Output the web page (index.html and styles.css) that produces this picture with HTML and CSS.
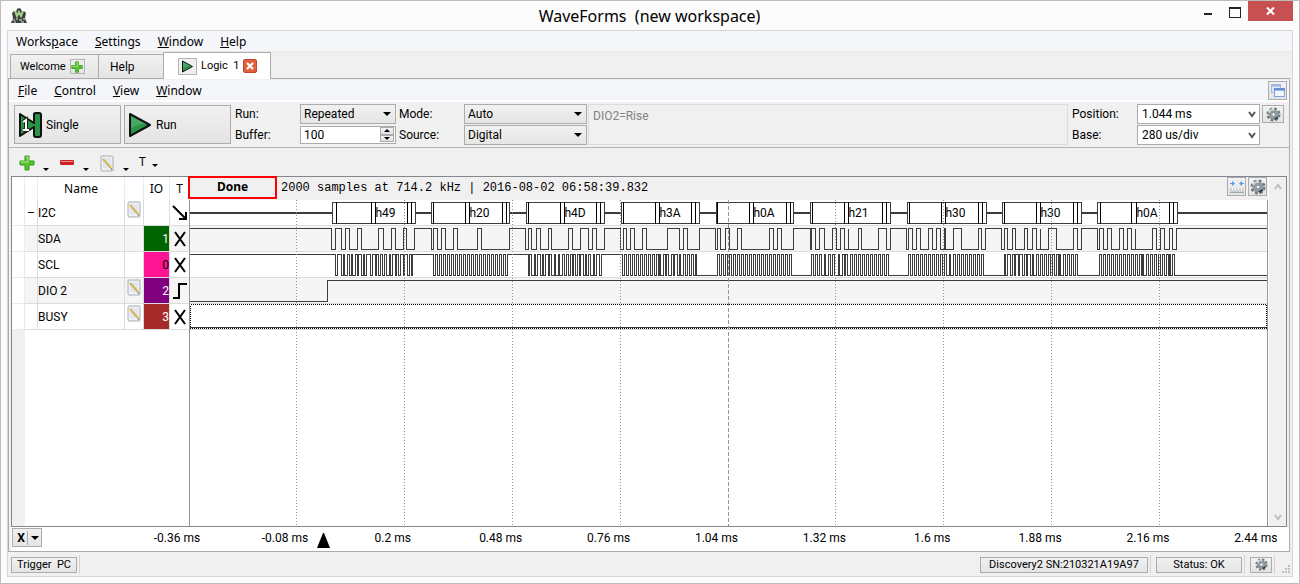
FILE: index.html
```html
<!DOCTYPE html>
<html lang="en">
<head>
    <meta charset="UTF-8">
    <meta name="viewport" content="width=device-width, initial-scale=1.0">
    <title>WaveForms (new workspace)</title>
    <link rel="stylesheet" href="styles.css">
</head>
<body>
    <!-- shared icons -->
    <svg class="defs" aria-hidden="true">
        <symbol id="gear" viewBox="0 0 16 16">
            <circle cx="8" cy="8" r="6" fill="none" stroke="#6d777c" stroke-width="3" stroke-dasharray="2.7 2"/>
            <circle cx="8" cy="8" r="4" fill="#dfe5e6" stroke="#8d999d" stroke-width="3"/>
            <path d="M3 6 A5 5 0 0 1 9 3" fill="none" stroke="#ccd5d7" stroke-width="2"/>
            <path d="M9 13 L13 11" stroke="#384650" stroke-width="2"/>
            <circle cx="8" cy="8" r="2" fill="#fff" stroke="#66757c"/>
        </symbol>
        <symbol id="plus" viewBox="0 0 16 16">
            <path d="M6 1h4v5h5v4h-5v5H6v-5H1V6h5z" fill="#5cc32c" stroke="#2f9a22"/>
            <path d="M7 2h2v5H2" fill="none" stroke="#b6ec8c"/>
        </symbol>
        <symbol id="note" viewBox="0 0 14 17">
            <rect x="1" y="1" width="12" height="15" rx="1" fill="#eef1f4" stroke="#a9adb4"/>
            <path d="M3 4h8M3 6h8M3 8h8M3 10h8M3 12h8" stroke="#cfdcf0"/>
            <path d="M3 4 L11 13" stroke="#d8b64e" stroke-width="2"/>
            <path d="M11 13l1 2" stroke="#777"/>
        </symbol>
        <symbol id="play" viewBox="0 0 24 26">
            <path d="M2 2 L22 13 L2 24z" fill="#289447" stroke="#111" stroke-width="2" stroke-linejoin="round"/>
            <path d="M3 4 L18 12 Q8 12 3 17z" fill="#6fbf83" opacity=".45"/>
        </symbol>
        <symbol id="chevron" viewBox="0 0 8 7">
            <path d="M1 1 L4 5 L7 1" fill="none" stroke="currentColor" stroke-width="2"/>
        </symbol>
    </svg>

    <header class="titlebar">
        <svg class="logo" width="18" height="18" viewBox="0 0 18 18">
            <path d="M2 6 L4 4 L6 5 L7 2 L9 1 L11 2 L12 5 L14 4 L16 6 L15 11 L17 16 H1 L3 11z" fill="#3c423c"/>
            <path d="M5 4 L7 9 L9 5 L11 9 L13 4" fill="none" stroke="#a8d28a" stroke-width="2"/>
            <path d="M2 13h3M6 12h2M9 13h3M13 12h3M4 15h2M11 15h3" stroke="#dde3dd" stroke-width="1"/>
        </svg>
        <h1>WaveForms&nbsp; (new workspace)</h1>
        <div class="window-buttons">
            <button class="minimize" aria-label="Minimize"></button>
            <button class="maximize" aria-label="Maximize"></button>
            <button class="close" aria-label="Close">
                <svg width="9" height="8" viewBox="0 0 9 8"><path d="M1 0.5 L8 7.5 M8 0.5 L1 7.5" stroke="#fff" stroke-width="2"/></svg>
            </button>
        </div>
    </header>

    <main class="client">
        <nav class="menubar">
            <a href="#">Works<u>p</u>ace</a>
            <a href="#"><u>S</u>ettings</a>
            <a href="#"><u>W</u>indow</a>
            <a href="#"><u>H</u>elp</a>
        </nav>

        <div class="tabs">
            <button class="tab">Welcome <span class="tab-icon"><svg width="12" height="12"><use href="#plus"/></svg></span></button>
            <button class="tab tab-help">Help</button>
            <button class="tab active">
                <span class="tab-icon tab-play"><svg width="13" height="13"><use href="#play"/></svg></span>
                Logic&nbsp; 1
                <span class="tab-close"><svg width="8" height="8" viewBox="0 0 8 8"><path d="M1 1 L7 7 M7 1 L1 7" stroke="#fff" stroke-width="2"/></svg></span>
            </button>
        </div>

        <section class="pane">
            <nav class="menubar inner">
                <a href="#"><u>F</u>ile</a>
                <a href="#"><u>C</u>ontrol</a>
                <a href="#"><u>V</u>iew</a>
                <a href="#"><u>W</u>indow</a>
                <button class="icon-button undock" aria-label="Undock">
                    <svg width="14" height="13" viewBox="0 0 14 13">
                        <rect x="0.5" y="0.5" width="9" height="8" fill="#dbe8f8" stroke="#9db8e0"/>
                        <path d="M0 1.5h10" stroke="#9db8e0" stroke-width="2"/>
                        <rect x="3.5" y="4.5" width="10" height="8" fill="#eef5fd" stroke="#7fa4dc"/>
                        <path d="M3 5.5h11" stroke="#5b8ad0" stroke-width="2"/>
                    </svg>
                </button>
            </nav>

            <div class="controls">
                <button class="big-button">
                    <svg width="24" height="26" viewBox="0 0 24 26">
                        <path d="M2 2 L16 11 V2 Q16 1 18 1 H21 Q23 1 23 3 V23 Q23 25 21 25 H18 Q16 25 16 23 V15 L2 24z" fill="#289447" stroke="#111" stroke-width="2" stroke-linejoin="round"/>
                        <path d="M5 10 L8 8 V18 M5 18 H11" fill="none" stroke="#222" stroke-width="4"/>
                        <path d="M5 10 L8 8 V18 M5 18 H11" fill="none" stroke="#fff" stroke-width="2"/>
                    </svg>
                    Single
                </button>
                <button class="big-button"><svg width="24" height="26"><use href="#play"/></svg> Run</button>

                <div class="fields">
                    <label for="run">Run:</label>
                    <span class="select"><select id="run"><option>Repeated</option><option>Single</option></select></span>
                    <label for="mode">Mode:</label>
                    <span class="select"><select id="mode"><option>Auto</option><option>Normal</option></select></span>
                    <label for="buffer">Buffer:</label>
                    <span class="spinner">
                        <input id="buffer" type="text" value="100">
                        <span class="steps"><button class="up" aria-label="More"></button><button class="down" aria-label="Less"></button></span>
                    </span>
                    <label for="source">Source:</label>
                    <span class="select"><select id="source"><option>Digital</option><option>Analog</option></select></span>
                </div>

                <div class="trigger-info">DIO2=Rise</div>

                <div class="time-fields">
                    <label for="position">Position:</label>
                    <span class="combo"><select id="position"><option>1.044 ms</option></select><svg width="8" height="7"><use href="#chevron"/></svg></span>
                    <label for="base">Base:</label>
                    <span class="combo"><select id="base"><option>280 us/div</option></select><svg width="8" height="7"><use href="#chevron"/></svg></span>
                </div>
                <button class="icon-button time-gear" aria-label="Time options"><svg width="15" height="15"><use href="#gear"/></svg></button>
            </div>

            <div class="edit-bar">
                <button class="tool" aria-label="Add"><svg width="16" height="16"><use href="#plus"/></svg><i></i></button>
                <button class="tool" aria-label="Remove"><svg width="16" height="16" viewBox="0 0 16 16"><rect x="1" y="5" width="14" height="5" rx="1" fill="#cc2025"/><path d="M2 6.5h12" stroke="#ec8c8c"/></svg><i></i></button>
                <button class="tool" aria-label="Edit"><svg width="16" height="17"><use href="#note"/></svg><i></i></button>
                <button class="tool tool-text">T<i></i></button>
            </div>

            <div class="scope">
                <table class="signals">
                    <thead>
                        <tr><th class="head"></th><th class="fold"></th><th class="name">Name</th><th class="edit"></th><th class="io">IO</th><th class="trig">T</th></tr>
                    </thead>
                    <tbody>
                        <tr>
                            <td class="head"></td><td class="fold">–</td><td>I2C</td>
                            <td class="edit"><svg width="14" height="17"><use href="#note"/></svg></td><td></td>
                            <td class="trig"><svg width="16" height="16" viewBox="0 0 16 16"><path d="M1 1 L13 13 M14 7 V14 H7" fill="none" stroke="#000" stroke-width="2"/></svg></td>
                        </tr>
                        <tr>
                            <td class="head"></td><td></td><td>SDA</td><td></td><td class="io green">1</td>
                            <td class="trig"><svg width="12" height="16" viewBox="0 0 12 16"><path d="M1 1 L11 15 M11 1 L1 15" stroke="#000" stroke-width="2"/></svg></td>
                        </tr>
                        <tr>
                            <td class="head"></td><td></td><td>SCL</td><td></td><td class="io pink">0</td>
                            <td class="trig"><svg width="12" height="16" viewBox="0 0 12 16"><path d="M1 1 L11 15 M11 1 L1 15" stroke="#000" stroke-width="2"/></svg></td>
                        </tr>
                        <tr>
                            <td class="head"></td><td></td><td>DIO 2</td>
                            <td class="edit"><svg width="14" height="17"><use href="#note"/></svg></td><td class="io purple">2</td>
                            <td class="trig"><svg width="14" height="16" viewBox="0 0 14 16"><path d="M0 15 H6 V1 H14" fill="none" stroke="#000" stroke-width="2"/></svg></td>
                        </tr>
                        <tr>
                            <td class="head"></td><td></td><td>BUSY</td>
                            <td class="edit"><svg width="14" height="17"><use href="#note"/></svg></td><td class="io brown">3</td>
                            <td class="trig"><svg width="12" height="16" viewBox="0 0 12 16"><path d="M1 1 L11 15 M11 1 L1 15" stroke="#000" stroke-width="2"/></svg></td>
                        </tr>
                        <tr class="rest"><td class="head"></td><td colspan="5"></td></tr>
                    </tbody>
                </table>

                <div class="plot-area">
                    <div class="plot-head">
                        <strong class="state">Done</strong>
                        <span class="samples">2000 samples at 714.2 kHz | 2016-08-02 06:58:39.832</span>
                        <button class="icon-button" aria-label="Measure"><svg width="14" height="13" viewBox="0 0 14 13">
                            <path d="M0 3.5h4M10 3.5h4" stroke="#5b9bea" stroke-width="1"/><path d="M2 1v5l3-2.5zM12 1v5l-3-2.5z" fill="#5b9bea"/>
                            <rect x="0" y="8" width="14" height="4" fill="#cfd2d6"/><path d="M0 12.5h14" stroke="#9aa"/><path d="M2.5 8v2M5.5 8v2M8.5 8v2M11.5 8v2" stroke="#fff"/>
                        </svg></button>
                        <button class="icon-button" aria-label="Plot options"><svg width="16" height="16"><use href="#gear"/></svg></button>
                    </div>
                    <svg id="plot" class="plot"></svg>
                </div>

                <div class="scrollbar">
                    <svg class="flip" width="8" height="7"><use href="#chevron"/></svg>
                    <svg width="8" height="7"><use href="#chevron"/></svg>
                </div>
            </div>

            <div class="axis">
                <button class="axis-button"><b>X</b><i></i></button>
                <div class="ticks">
                    <span>-0.36 ms</span>
                    <span>-0.08 ms</span>
                    <span>0.2 ms</span>
                    <span>0.48 ms</span>
                    <span>0.76 ms</span>
                    <span>1.04 ms</span>
                    <span>1.32 ms</span>
                    <span>1.6 ms</span>
                    <span>1.88 ms</span>
                    <span>2.16 ms</span>
                    <span>2.44 ms</span>
                    <svg class="trigger-mark" width="13" height="15" viewBox="0 0 13 15"><path d="M6 0 H7 L13 15 H0z"/></svg>
                </div>
            </div>
        </section>

        <footer class="statusbar">
            <button>Trigger&nbsp; PC</button>
            <span class="divider"></span>
            <button class="device">Discovery2 SN:210321A19A97</button>
            <span class="divider"></span>
            <button class="status">Status: OK</button>
            <span class="divider"></span>
            <button class="icon-button" aria-label="Device options"><svg width="13" height="13"><use href="#gear"/></svg></button>
            <span class="divider"></span>
            <svg class="grip" width="9" height="9" viewBox="0 0 9 9"><path d="M6 0h2v2h-2zM3 3h2v2h-2zM6 3h2v2h-2zM0 6h2v2h-2zM3 6h2v2h-2zM6 6h2v2h-2z" fill="#bfbfbf"/></svg>
        </footer>
    </main>

    <script src="plot.js"></script>
</body>
</html>
```

FILE: styles.css
```css
* {
    box-sizing: border-box;
}

body {
    margin: 0;
    min-height: 100vh;
    display: flex;
    flex-direction: column;
    background: #fcfcfc;
    border: 1px solid #bdbdbd;
    font-family: "Roboto", "Liberation Sans", sans-serif;
    font-size: 12px;
    line-height: 14px;
    color: #000;
}

button, input, select {
    font: inherit;
    color: inherit;
    margin: 0;
    padding: 0;
    border-radius: 0;
}

button {
    background: linear-gradient(#f1f1f1, #e4e4e4);
    border: 1px solid #acacac;
}

svg {
    display: block;
    flex: none;
}

.defs {
    position: absolute;
    width: 0;
    height: 0;
}

/* title bar */
.titlebar {
    display: flex;
    justify-content: space-between;
    height: 29px;
    padding-left: 9px;
}

.logo {
    margin-top: 6px;
}

.titlebar h1 {
    margin: 0 0 0 77px;
    font: 16px/30px "Noto Sans", sans-serif;
}

.window-buttons {
    display: flex;
    padding-right: 6px;
}

.window-buttons button {
    width: 27px;
    height: 20px;
    border: 0;
    background: none;
    display: flex;
    justify-content: center;
}

.minimize::before {
    content: "";
    width: 8px;
    height: 2px;
    margin-top: 12px;
    background: #222;
}

.maximize::before {
    content: "";
    width: 10px;
    height: 8px;
    margin-top: 6px;
    border: 1px solid #222;
    border-top-width: 2px;
}

.window-buttons .close {
    width: 45px;
    background: #c75050;
    align-items: center;
}

/* client area */
.client {
    flex: 1;
    display: flex;
    flex-direction: column;
    margin: 0 6px;
    margin-bottom: 6px;
    border: 1px solid #d6d6d6;
    background: #f0f0f0;
}

.menubar {
    display: flex;
    height: 21px;
    padding-left: 8px;
    gap: 17px;
    background: #f4f6f9;
    border-bottom: 1px solid #e7e9eb;
    font: 12px/21px "Noto Sans", sans-serif;
}

.menubar a {
    color: #000;
    text-decoration: none;
}

.inner {
    height: 22px;
    padding-left: 9px;
    line-height: 22px;
    border-bottom: 2px solid #fff;
}

.undock {
    margin: 1px 2px 0 auto;
}

.icon-button {
    width: 19px;
    height: 19px;
    display: flex;
    align-items: center;
    justify-content: center;
}

.tabs {
    display: flex;
    align-items: flex-end;
    padding-left: 2px;
    height: 26px;
}

.tab {
    display: flex;
    align-items: center;
    gap: 4px;
    height: 24px;
    width: 89px;
    padding-left: 9px;
    border-bottom: 0;
    font-size: 11px;
}

.tab-help {
    width: 66px;
    padding-left: 11px;
    margin-left: -1px;
    font-size: 12px;
}

.tab-icon {
    width: 15px;
    height: 15px;
    border: 1px solid #b4b4b4;
    display: flex;
    align-items: center;
    justify-content: center;
}

.active {
    width: 108px;
    height: 27px;
    padding-left: 14px;
    margin: 0 0 -1px -1px;
    background: #fff;
    z-index: 1;
}

.tab-play {
    width: 19px;
    height: 17px;
    background: #f0f0f0;
}

.tab-close {
    width: 14px;
    height: 14px;
    border-radius: 2px;
    background: #e0613f;
    border: 1px solid #c4452b;
    display: flex;
    align-items: center;
    justify-content: center;
}

.pane {
    flex: 1;
    display: flex;
    flex-direction: column;
    margin-right: 2px;
    padding-top: 1px;
    border: 1px solid #acacac;
}

/* run controls */
.controls {
    display: flex;
    height: 46px;
    padding: 2px 5px 0 5px;
    border-bottom: 1px solid #b4b4b4;
}

.big-button {
    width: 107px;
    height: 39px;
    margin: 1px 3px 0 0;
    padding-left: 3px;
    display: flex;
    align-items: center;
    gap: 4px;
}

.fields, .time-fields {
    display: grid;
    grid-template-rows: 20px 20px;
    row-gap: 1px;
    align-items: center;
}

.fields {
    grid-template-columns: 65px 96px 68px 123px;
    padding-left: 1px;
}

.fields label:nth-of-type(even) {
    padding-left: 3px;
}

.time-fields {
    grid-template-columns: 65px 123px;
    padding-left: 4px;
}

.select, .combo {
    position: relative;
    height: 20px;
}

.select select, .combo select {
    appearance: none;
    width: 100%;
    height: 20px;
    padding: 0 3px;
    border: 1px solid #acacac;
    background: linear-gradient(#f1f1f1, #e5e5e5);
}

.combo select {
    background: #fff;
    padding-left: 4px;
}

.combo svg {
    position: absolute;
    right: 4px;
    top: 7px;
    color: #555;
}

.select::after, .tool i, .axis-button i, .steps button::before {
    content: "";
    border: 4px solid transparent;
    border-top-color: #000;
    border-bottom: 0;
}

.select::after {
    position: absolute;
    right: 5px;
    top: 8px;
    pointer-events: none;
}

.spinner {
    display: flex;
    height: 18px;
    border: 1px solid #acacac;
    background: #fff;
}

.spinner input {
    flex: 1;
    min-width: 0;
    border: 0;
    padding-left: 3px;
}

.steps {
    display: flex;
    flex-direction: column;
    width: 15px;
    padding: 0 1px 1px 0;
}

.steps button {
    flex: 1;
    display: flex;
    align-items: center;
    justify-content: center;
}

.steps button::before {
    border-width: 3px 3px 0;
}

.steps .up::before {
    transform: rotate(180deg);
}

.trigger-info {
    flex: 1;
    height: 41px;
    margin-left: 1px;
    padding: 4px;
    border: 1px solid #dcdcdc;
    color: #838383;
}

.time-gear {
    width: 22px;
    height: 18px;
    margin: 1px 0 0 2px;
}

/* edit bar */
.edit-bar {
    display: flex;
    height: 28px;
    padding: 6px 0 0 10px;
}

.tool {
    width: 40px;
    height: 18px;
    border: 0;
    background: none;
    display: flex;
    align-items: flex-end;
    gap: 8px;
}

.tool i {
    border-width: 3px 3px 0;
    margin-bottom: 1px;
}

.tool svg {
    align-self: center;
}

.tool-text {
    height: 16px;
    gap: 6px;
    font: 12px/16px "Noto Sans", sans-serif;
}

.tool-text i {
    margin-bottom: 3px;
}

/* signals and plot */
.scope {
    flex: 1;
    display: flex;
    margin: 0 2px;
    border: 1px solid #828790;
    background: #fff;
}

.signals {
    width: 177px;
    table-layout: fixed;
    border-collapse: separate;
    border-spacing: 0;
}

.signals th {
    height: 23px;
    padding: 0;
    border-right: 1px solid #e3edf8;
    font: 12px/22px "Noto Sans", sans-serif;
}

.signals td {
    height: 26px;
    padding: 0;
    border-right: 1px solid #dcdcdc;
    border-bottom: 1px solid #dcdcdc;
}

.signals tr:nth-child(even) td {
    background: #f5f5f5;
}

.signals th.head, .signals tr td.head {
    width: 13px;
    background: #fff;
    border-color: #e3edf8;
}

.signals th.fold {
    width: 13px;
}

.signals td.fold {
    text-align: center;
}

.signals th.name {
    width: 87px;
}

.signals th.edit {
    width: 19px;
}

.signals th.io {
    width: 26px;
}

.signals th.trig, .signals td.trig {
    border-right: 0;
}

.edit svg {
    margin: -7px auto 0 2px;
}

.signals td.trig svg {
    margin: 0 auto;
}

.signals td.io {
    text-align: right;
    color: #fff;
}

.signals tbody tr td.green { background: #006400; }
.signals tbody tr td.pink { background: #ff1493; color: #000; }
.signals tbody tr td.purple { background: #800080; }
.signals tbody tr td.brown { background: #a52a2a; }

.signals tbody tr.rest td {
    height: auto;
    border: 0;
    background: #fff;
}

.signals tbody tr.rest td.head {
    background: #f0f0f0;
}

.plot-area {
    flex: 1;
    min-width: 0;
    display: flex;
    flex-direction: column;
}

.plot-head {
    display: flex;
    height: 23px;
    padding-right: 1px;
    gap: 2px;
    background: #f0f0f0;
}

.state {
    width: 89px;
    height: 23px;
    margin: -1px 0 0 -1px;
    border: 2px solid red;
    text-align: center;
    font: bold 12px/18px "Noto Sans", sans-serif;
}

.samples {
    flex: 1;
    padding-left: 2px;
    font: 12px/23px "Liberation Mono", monospace;
    white-space: nowrap;
}

.plot {
    flex: 1;
    width: 100%;
    min-height: 140px;
    border: solid #969696;
    border-width: 0 1px;
    shape-rendering: crispEdges;
}

.scrollbar {
    width: 18px;
    padding: 6px 0 5px;
    display: flex;
    flex-direction: column;
    justify-content: space-between;
    align-items: center;
    background: #f0f0f0;
    color: #bcbcbc;
    border-left: 1px solid #fff;
}

.flip {
    transform: rotate(180deg);
}

.axis {
    display: flex;
    height: 24px;
    padding: 1px 33px 0 1px;
    margin-left: 2px;
    background: #fff;
}

.axis-button {
    width: 30px;
    height: 19px;
    display: flex;
    align-items: center;
    justify-content: space-evenly;
}

.axis-button i {
    margin-left: 1px;
}

.axis-button b {
    width: 13px;
    border-right: 1px solid #acacac;
}

.ticks {
    position: relative;
    flex: 1;
    display: flex;
    justify-content: space-between;
    margin-left: 135px;
    line-height: 20px;
}

.ticks span {
    width: 0;
    display: flex;
    justify-content: center;
    white-space: nowrap;
}

/* trigger sits at t = 0 */
.trigger-mark {
    position: absolute;
    left: 13%;
    top: 5px;
}

/* status bar */
.statusbar {
    display: flex;
    align-items: center;
    height: 24px;
    padding: 1px 1px 0 3px;
    gap: 2px;
    font-size: 11px;
}

.statusbar button {
    height: 16px;
    padding: 0 5px;
    line-height: 14px;
    white-space: nowrap;
}

.divider {
    width: 1px;
    height: 19px;
    margin-right: 3px;
    background: #d4d4d4;
}

.statusbar .device {
    width: 168px;
    margin-left: auto;
}

.statusbar .status {
    width: 86px;
}

.statusbar .icon-button {
    width: 22px;
    padding: 0;
}

.grip {
    align-self: flex-end;
    margin: 0 0 2px 2px;
}
```

FILE: plot.js
```js
var svg = document.getElementById("plot");

var ORIGIN = 190;   // x of the first sample
var SPAN = 1077;    // length of the capture
var ROW = 26;
var INK = "#3c3c3c";

// start, marker, data, ack, stop, end and decoded value
var frames = [
    [332, 336, 371, 375, 407, 411, 415, "h49"],
    [431, 433, 465, 469, 502, 506, 509, "h20"],
    [526, 528, 560, 564, 596, 600, 604, "h4D"],
    [621, 623, 655, 659, 691, 695, 699, "h3A"],
    [716, 717, 749, 753, 786, 790, 793, "h0A"],
    [810, 812, 844, 848, 882, 886, 890, "h21"],
    [907, 909, 941, 945, 978, 982, 986, "h30"],
    [1002, 1004, 1036, 1040, 1073, 1077, 1081, "h30"],
    [1097, 1100, 1131, 1136, 1169, 1173, 1177, "h0A"]
];

// level changes, the line starts high
var sda = [
    331, 335, 341, 345, 349, 357, 361, 378, 383, 391, 395, 403, 406, 414,
    431, 433, 437, 441, 445, 453, 457, 477, 481, 509,
    525, 528, 531, 536, 540, 548, 551, 568, 572, 580, 588, 592, 596, 604,
    620, 623, 626, 630, 634, 642, 646, 667, 679, 683, 687, 699,
    715, 717, 720, 725, 729, 737, 741, 769, 773, 777, 781, 793,
    810, 811, 815, 819, 824, 832, 836, 840, 844, 848, 848, 858, 861, 878, 886, 890,
    906, 908, 912, 916, 920, 928, 932, 936, 940, 944, 945, 953, 961, 978, 981, 985,
    1001, 1004, 1007, 1012, 1015, 1024, 1027, 1032, 1036, 1040, 1040, 1048, 1056, 1073, 1077, 1081,
    1097, 1099, 1103, 1107, 1111, 1119, 1123, 1127, 1131, 1135, 1135, 1152, 1156, 1160, 1164, 1169, 1172, 1176
];

var scl = [].concat(
    [335, 337, 341, 343, 344, 347, 349, 351, 352, 355, 357, 358, 361, 363, 364, 366, 370, 372, 375, 376,
     378, 380, 382, 384, 386, 389, 390, 392, 395, 396, 398, 400, 403, 404, 407, 409, 411, 412],
    clock(433, 507),
    [528, 529, 531, 534, 535, 537, 540, 542, 543, 545, 548, 549, 551, 554, 555, 558, 559, 562, 564, 566,
     568, 570, 572, 573, 575, 577, 579, 580, 583, 585, 586, 588, 590, 593, 594, 596, 599, 601],
    clock(622, 656),
    [658, 659, 660, 663, 665, 666, 668, 671, 673, 674, 677, 679, 680, 683, 685, 687, 689, 691, 693, 695, 696],
    clock(717, 791),
    clock(811, 823), [824, 825], clock(828, 836), [838, 839], [842, 844], [845, 847], clock(850, 888),
    clock(908, 946), [949, 950], clock(953, 983),
    [1004, 1005, 1007, 1010, 1012, 1014, 1015, 1018, 1019, 1022, 1024, 1026, 1027, 1030, 1032, 1033],
    clock(1036, 1058), [1059, 1060], clock(1063, 1079),
    clock(1099, 1141), [1142, 1143], clock(1146, 1168), [1169, 1170], [1172, 1174]
);

// regular clock: an edge every 2 units, ends on a rising edge
function clock(from, to) {
    var edges = [];
    for (var x = from; x + 2 <= to; x += 4) {
        edges.push(x, x + 2);
    }
    return edges;
}

function add(name, attributes, text) {
    var node = document.createElementNS("http://www.w3.org/2000/svg", name);
    for (var key in attributes) {
        node.setAttribute(key, attributes[key]);
    }
    if (text) {
        node.textContent = text;
    }
    svg.appendChild(node);
}

function draw() {
    svg.innerHTML = "";
    var width = svg.clientWidth;
    var height = svg.clientHeight;

    function px(x) {
        return Math.round((x - ORIGIN) * width / SPAN) + 0.5;
    }

    function line(d, color, extra) {
        add("path", Object.assign({ d: d, fill: "none", stroke: color || INK }, extra));
    }

    function wave(edges, row, high) {
        var top = row * ROW + 2.5;
        var bottom = row * ROW + 23.5;
        var d = "M0 " + (high ? top : bottom);
        edges.forEach(function (x) {
            high = !high;
            d += "H" + px(x) + "V" + (high ? top : bottom);
        });
        line(d + "H" + width);
    }

    // row backgrounds
    for (var r = 0; r < 5; r++) {
        add("rect", { x: 0, y: r * ROW, width: width, height: ROW, fill: r % 2 ? "#f5f5f5" : "#fff" });
        line("M0 " + (r * ROW + 25.5) + "H" + width, "#dcdcdc");
    }

    // I2C bus
    line("M0 13H" + width, INK, { "stroke-width": 2 });
    frames.forEach(function (f) {
        add("rect", { x: px(f[0]), y: 2.5, width: px(f[6]) - px(f[0]), height: 21, fill: "#fff", stroke: INK });
        for (var i = 1; i < 6; i++) {
            line("M" + px(f[i]) + " 2V24", "#000");
        }
        add("text", { x: px(f[3]), y: 17 }, f[7]);
    });

    wave(sda, 1, true);
    wave(scl, 2, true);
    wave([327], 3, false);
    wave([], 4, false);
    add("rect", { x: 0.5, y: 4 * ROW + 0.5, width: width - 1, height: 24, fill: "none", stroke: "#000", "stroke-dasharray": "1 1" });

    // time grid, the middle one is dashed
    for (var t = 1; t < 10; t++) {
        var x = Math.floor((width + 2) * t / 10 - 1.5) + 0.5;
        line("M" + x + " 0V" + height, "#969696", { "stroke-dasharray": t === 5 ? "4 2" : "1 2" });
    }
}

draw();
window.addEventListener("resize", draw);
```
